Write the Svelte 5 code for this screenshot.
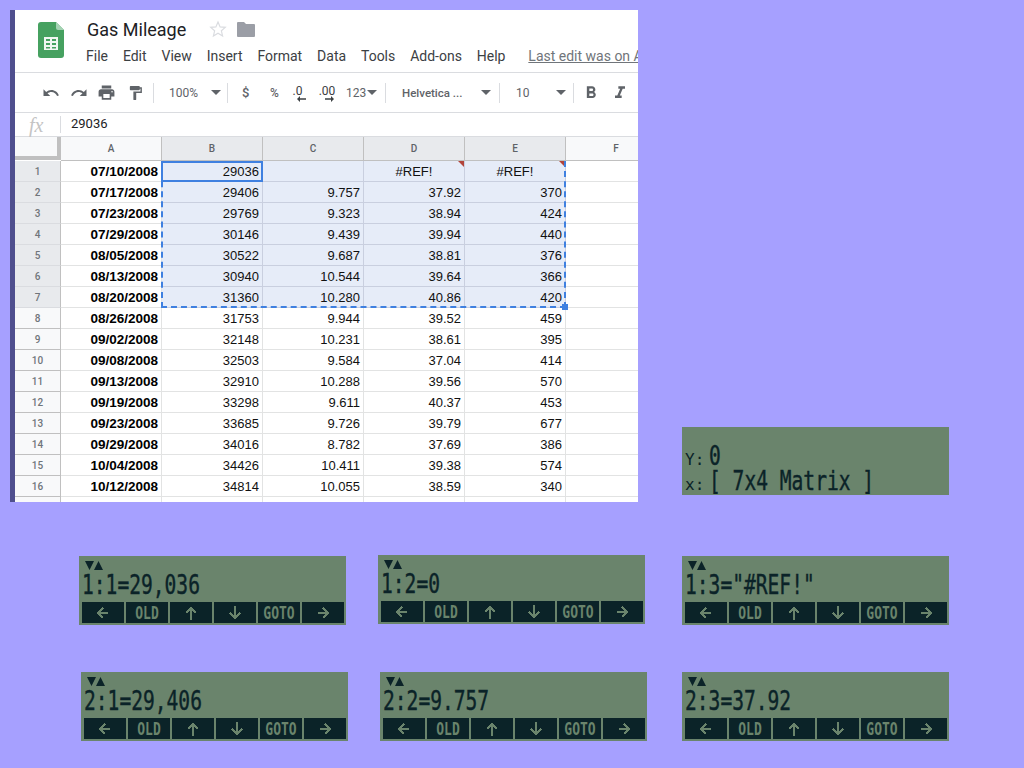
<script>
  const rows = [
    ['07/10/2008','29036','','#REF!','#REF!'],
    ['07/17/2008','29406','9.757','37.92','370'],
    ['07/23/2008','29769','9.323','38.94','424'],
    ['07/29/2008','30146','9.439','39.94','440'],
    ['08/05/2008','30522','9.687','38.81','376'],
    ['08/13/2008','30940','10.544','39.64','366'],
    ['08/20/2008','31360','10.280','40.86','420'],
    ['08/26/2008','31753','9.944','39.52','459'],
    ['09/02/2008','32148','10.231','38.61','395'],
    ['09/08/2008','32503','9.584','37.04','414'],
    ['09/13/2008','32910','10.288','39.56','570'],
    ['09/19/2008','33298','9.611','40.37','453'],
    ['09/23/2008','33685','9.726','39.79','677'],
    ['09/29/2008','34016','8.782','37.69','386'],
    ['10/04/2008','34426','10.411','39.38','574'],
    ['10/12/2008','34814','10.055','38.59','340']
  ];
  const cols = ['A','B','C','D','E','F'];
  const menu = ['File','Edit','View','Insert','Format','Data','Tools','Add-ons','Help'];
  const lcds = [
    { x: 79, y: 556, t: '1:1=29,036' },
    { x: 378, y: 555, t: '1:2=0' },
    { x: 682, y: 556, t: '1:3="#REF!"' },
    { x: 81, y: 672, t: '2:1=29,406' },
    { x: 380, y: 672, t: '2:2=9.757' },
    { x: 682, y: 672, t: '2:3=37.92' }
  ];
</script>

{#snippet arrow(d)}
  <svg class="arrow" width="16" height="16" viewBox="0 0 16 16"><path d={d} /></svg>
{/snippet}

{#snippet caret()}
  <svg class="caret" width="10" height="5" viewBox="0 0 10 5"><path d="M0 0h10L5 5z" /></svg>
{/snippet}

<div class="desk">
  <section class="sheet">
    <header class="head">
      <svg class="logo" width="26" height="36" viewBox="0 0 26 36">
        <path d="M3 0h15l8 8v25a3 3 0 0 1-3 3H3a3 3 0 0 1-3-3V3a3 3 0 0 1 3-3z" fill="#46a160" />
        <path d="M18 0l8 8h-6a2 2 0 0 1-2-2z" fill="#a5d3b4" />
        <path d="M6 15h14v13H6zM8 17v2h4v-2zm6 0v2h4v-2zM8 21v2h4v-2zm6 0v2h4v-2zM8 25v1.500h4V25zm6 0v1.500h4V25z" fill="#f1f6f2" fill-rule="evenodd" />
      </svg>
      <div class="titles">
        <div class="titlerow">
          <span class="title">Gas Mileage</span>
          <svg class="star" width="18" height="18" viewBox="0 0 24 24"><path d="M12 2.800l2.800 6.400 6.900.6-5.200 4.600 1.600 6.800-6.100-3.600-6.100 3.600 1.600-6.800-5.200-4.600 6.900-.6z" /></svg>
          <svg class="folder" width="18" height="16" viewBox="0 0 18 16"><path d="M1 1h6l2 2h8a1 1 0 0 1 1 1v11a1 1 0 0 1-1 1H1a1 1 0 0 1-1-1V2a1 1 0 0 1 1-1z" /></svg>
        </div>
        <nav class="menu">
          {#each menu as m}<span>{m}</span>{/each}
          <span class="last">Last edit was on April 3</span>
        </nav>
      </div>
    </header>

    <div class="toolbar">
      <svg class="ti u" width="18" height="18" viewBox="0 0 24 24"><path d="M12.500 8c-2.650 0-5.050.99-6.900 2.600L2 7v9h9l-3.620-3.620c1.390-1.160 3.160-1.880 5.120-1.880 3.540 0 6.550 2.310 7.600 5.500l2.370-.78C21.080 11.030 17.150 8 12.500 8z" /></svg>
      <svg class="ti r" width="18" height="18" viewBox="0 0 24 24"><path d="M18.400 10.600C16.550 8.990 14.150 8 11.500 8c-4.650 0-8.580 3.030-9.960 7.220L3.900 16c1.050-3.190 4.050-5.500 7.600-5.500 1.950 0 3.730.72 5.120 1.880L13 16h9V7l-3.600 3.600z" /></svg>
      <svg class="ti p" width="19" height="19" viewBox="0 0 24 24"><path d="M19 8H5c-1.660 0-3 1.340-3 3v6h4v4h12v-4h4v-6c0-1.660-1.340-3-3-3zm-3 11H8v-5h8v5zm3-7c-.55 0-1-.45-1-1s.45-1 1-1 1 .45 1 1-.45 1-1 1zm-1-9H6v4h12V3z" /></svg>
      <svg class="ti f" width="18" height="18" viewBox="0 0 24 24"><path d="M18 4V3c0-.55-.45-1-1-1H5c-.55 0-1 .45-1 1v4c0 .55.45 1 1 1h12c.55 0 1-.45 1-1V6h1v4H9v11c0 .55.45 1 1 1h2c.55 0 1-.45 1-1v-9h8V4h-3z" /></svg>
      <i class="sep s1"></i>
      <span class="tt zoom">100%</span>
      <span class="c1">{@render caret()}</span>
      <i class="sep s2"></i>
      <span class="tt sym dollar">$</span>
      <span class="tt sym pct">%</span>
      <span class="tt dec d1">.0<svg width="9" height="6" viewBox="0 0 9 6"><path d="M9 2.300H3V0L0 3l3 3V3.700h6z" /></svg></span>
      <span class="tt dec d2">.00<svg width="9" height="6" viewBox="0 0 9 6"><path d="M0 2.300h6V0l3 3-3 3V3.700H0z" /></svg></span>
      <span class="tt n123">123</span>
      <span class="c2">{@render caret()}</span>
      <i class="sep s3"></i>
      <span class="tt font">Helvetica ...</span>
      <span class="c3">{@render caret()}</span>
      <i class="sep s4"></i>
      <span class="tt size">10</span>
      <span class="c4">{@render caret()}</span>
      <i class="sep s5"></i>
      <svg class="ti bold" width="20" height="20" viewBox="0 0 24 24"><path d="M15.600 10.790c.97-.67 1.650-1.770 1.650-2.790 0-2.260-1.750-4-4-4H7v14h7.040c2.090 0 3.710-1.700 3.710-3.790 0-1.520-.86-2.820-2.150-3.420zM10 6.500h3c.83 0 1.500.67 1.500 1.500s-.67 1.500-1.500 1.500h-3v-3zm3.500 9H10v-3h3.500c.83 0 1.500.67 1.500 1.500s-.67 1.500-1.500 1.500z" /></svg>
      <svg class="ti ital" width="20" height="20" viewBox="0 0 24 24"><path d="M10 4v3h2.210l-3.420 8H6v3h8v-3h-2.210l3.420-8H18V4z" /></svg>
    </div>

    <div class="formula">
      <span class="fx">fx</span>
      <i></i>
      <span class="val">29036</span>
    </div>

    <div class="grid">
      <div class="colhead">
        <div class="corner"></div>
        {#each cols as c, i}
          <div class="ch" class:on={i > 0 && i < 5}>{c}</div>
        {/each}
      </div>
      {#each rows as r, i}
        <div class="row">
          <div class="rh" class:on={i < 7}>{i + 1}</div>
          <div class="cell date">{r[0]}</div>
          {#each r.slice(1) as v}
            <div class="cell" class:sel={i < 7} class:err={v === '#REF!'}>{v}</div>
          {/each}
          <div class="cell"></div>
        </div>
      {/each}
      <div class="row tail"><div class="rh"></div><div class="cell"></div><div class="cell"></div><div class="cell"></div><div class="cell"></div><div class="cell"></div><div class="cell"></div></div>
      <div class="marquee"></div>
      <div class="active"></div>
      <div class="handle"></div>
    </div>
  </section>

  <section class="lcd big">
    <div class="bigrow one"><span class="reg">Y:</span><span class="hp">0</span></div>
    <div class="bigrow two"><span class="reg">x:</span><span class="hp">[ 7x4 Matrix ]</span></div>
  </section>

  {#each lcds as l}
    <section class="lcd" style="left:{l.x}px;top:{l.y}px">
      <svg class="ann" width="18" height="9" viewBox="0 0 18 9"><path d="M0 0h9L4.500 9zM9 9h9L13.500 0z" /></svg>
      <div class="hp line">{l.t}</div>
      <div class="keys">
        <div class="key">{@render arrow('M13 8H4M8 3L3 8l5 5')}</div>
        <div class="key"><span>OLD</span></div>
        <div class="key">{@render arrow('M8 15V3M3 8l5-5 5 5')}</div>
        <div class="key">{@render arrow('M8 1v12M3 8l5 5 5-5')}</div>
        <div class="key"><span>GOTO</span></div>
        <div class="key">{@render arrow('M3 8h9M8 3l5 5-5 5')}</div>
      </div>
    </section>
  {/each}
</div>

<style>
  :global(body) { margin: 0; background: #a6a0ff; }
  .desk { position: relative; width: 1024px; height: 768px; overflow: hidden; background: #a6a0ff; }

  .sheet {
    position: absolute; left: 10px; top: 10px; width: 623px; height: 492px;
    border-left: 5px solid #4f4f8e; background: #fff; overflow: hidden;
    font-family: "Liberation Sans", Arial, sans-serif; color: #111;
  }
  .head { display: flex; height: 62px; border-bottom: 1px solid #dadce0; }
  .logo { margin: 12px 0 0 23px; flex: none; }
  .titles { margin-left: 22px; flex: none; }
  .titlerow { display: flex; align-items: center; height: 38px; margin-left: 1px; }
  .title { font: 18px/24px Roboto, sans-serif; margin-top: 1px; width: 122px; color: #202124; }
  .star { fill: none; stroke: #dadce0; stroke-width: 1.600; }
  .folder { fill: #9b9ea6; margin-left: 10px; }
  .menu { display: flex; font: 14px/18px Roboto, sans-serif; color: #3c4043; white-space: nowrap; margin-top: -1px; }
  .menu span { margin-right: 14.900px; }
  .menu .last { margin-left: 8px; color: #70757a; text-decoration: underline; }

  .toolbar { display: flex; align-items: center; height: 39px; border-bottom: 1px solid #dadce0; color: #5f6368; font-size: 12px; padding-left: 27px; white-space: nowrap; }
  .ti { fill: #5f6368; flex: none; }
  .r { margin-left: 10px; } .p { margin-left: 9px; } .f { margin-left: 11px; width: 17px; }
  .sep { width: 1px; height: 20px; background: #dadce0; flex: none; }
  .s1 { margin-left: 9px; }
  .tt { font: 12px/16px Roboto, sans-serif; color: #5f6368; flex: none; }
  .zoom { margin-left: 15px; width: 29px; }
  .caret { fill: #5f6368; display: block; }
  .c1, .c2, .c3, .c4 { flex: none; }
  .c1 { margin-left: 13px; } .s2 { margin-left: 6px; }
  .sym { font-weight: 500; font-size: 13px; }
  .dollar { margin-left: 14px; width: 8px; }
  .pct { margin-left: 20px; width: 12px; font-size: 12px; }
  .dec { display: flex; flex-direction: column; align-items: center; line-height: 12px; margin-top: 2px; color: #3c4043; }
  .dec svg { fill: #3c4043; margin-top: -1px; }
  .d1 { margin-left: 10px; width: 11px; }
  .d1 svg { margin-left: 8px; }
  .d2 { margin-left: 15px; width: 18px; }
  .d2 svg { margin-left: 5px; }
  .n123 { margin-left: 10px; width: 20px; }
  .c2 { margin-left: 1px; } .s3 { margin-left: 8px; }
  .font { margin-left: 16px; width: 62px; font-size: 11.500px; font-weight: 500; }
  .c3 { margin-left: 17px; } .s4 { margin-left: 8px; }
  .size { margin-left: 16px; width: 13px; }
  .c4 { margin-left: 27px; } .s5 { margin-left: 7px; }
  .bold { margin-left: 7px; }
  .ital { margin-left: 9px; }

  .formula { display: flex; align-items: center; height: 23px; border-bottom: 1px solid #dadce0; }
  .fx { font: italic 20px/22px "Liberation Serif", serif; color: #c4c4c4; margin-left: 14px; width: 31px; }
  .formula i { width: 1px; height: 17px; background: #dadce0; }
  .val { font: 13px/16px Roboto, sans-serif; margin-left: 10px; margin-top: -2px; color: #202124; }

  .grid { position: relative; }
  .colhead, .row { display: flex; }
  .colhead { height: 24px; }
  .corner { width: 42px; height: 19px; flex: none; background: #f8f9fa; border-right: 4px solid #c0c0c0; border-bottom: 4px solid #c0c0c0; margin-bottom: 1px; }
  .ch {
    width: 100px; flex: none; height: 23px; background: #f8f9fa; color: #5f6368;
    border-right: 1px solid #c0c0c0; border-bottom: 1px solid #c0c0c0;
    font: 500 10px/23px Roboto, sans-serif; text-align: center;
  }
  .ch.on { background: #e8eaed; }
  .row { height: 21px; }
  .rh {
    width: 45px; flex: none; height: 20px; background: #f8f9fa; color: #70757a;
    border-right: 1px solid #c0c0c0; border-bottom: 1px solid #c0c0c0;
    font: 500 10px/22px Roboto, sans-serif; text-align: center;
  }
  .rh.on { background: #e8eaed; border-bottom-color: #dadce0; }
  .cell {
    width: 97px; flex: none; height: 20px; padding-right: 3px;
    border-right: 1px solid #e2e3e3; border-bottom: 1px solid #e2e3e3;
    font-size: 13px; line-height: 22px; text-align: right; color: #111;
  }
  .date { font-size: 13.500px; font-weight: 700; color: #000; }
  .cell.sel { background: #e6ecf8; border-color: #c9cfdf; }
  .err { position: relative; text-align: center; padding-right: 0; width: 100px; }
  .err::after {
    content: ""; position: absolute; right: 0; top: 0; width: 0; height: 0;
    border-top: 6px solid #b3443a; border-left: 6px solid transparent;
  }
  .marquee {
    position: absolute; left: 146px; top: 24px; width: 405px; height: 147px;
    border-right: 2px dashed #3f80e0; border-bottom: 2px dashed #3f80e0; border-left: 2px dashed #3f80e0;
    box-sizing: border-box;
  }
  .active { position: absolute; left: 146px; top: 24px; width: 102px; height: 21px; border: 2px solid #3f80e0; box-sizing: border-box; }
  .handle { position: absolute; left: 547px; top: 167px; width: 6px; height: 6px; background: #3f80e0; }

  .lcd { position: absolute; width: 267px; height: 69px; background: #6a846c; color: #0b2328; overflow: hidden; }
  .big { left: 682px; top: 427px; height: 68px; }
  .ann { position: absolute; left: 6px; top: 5px; fill: #0b2328; }
  .hp {
    font-family: "DejaVu Sans Mono", "Liberation Mono", monospace; font-size: 19.600px; line-height: 16px;
    display: inline-block; white-space: pre; transform: scaleY(1.380); transform-origin: 0 100%;
    -webkit-text-stroke: 0.3px #0b2328;
  }
  .line { position: absolute; left: 3px; top: 25px; height: 16px; }
  .bigrow { position: absolute; left: 2px; display: flex; align-items: flex-end; color: #0b2328; }
  .bigrow.one { top: 25px; }
  .bigrow.two { top: 50px; }
  .reg { font: 16px/16px "DejaVu Sans Mono", monospace; width: 25px; padding-left: 1px; box-sizing: border-box; }
  .keys { position: absolute; left: 3px; top: 46px; display: flex; gap: 2px; }
  .key {
    width: 42px; height: 21px; background: #0b2328; color: #6a846c;
    display: flex; align-items: center; justify-content: center;
  }
  .key span {
    font: 700 13px/13px "DejaVu Sans Mono", monospace; display: block; transform: scaleY(1.380);
  }
  .arrow { fill: none; stroke: #6a846c; stroke-width: 2; shape-rendering: crispEdges; }
</style>
